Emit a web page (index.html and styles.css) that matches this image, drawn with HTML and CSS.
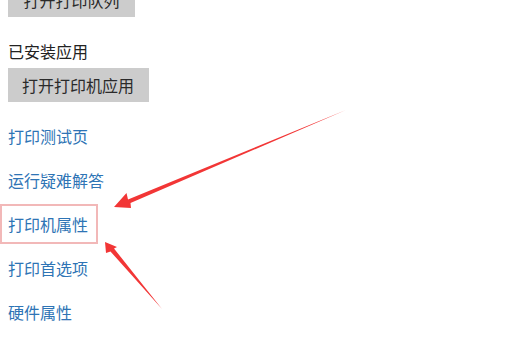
FILE: index.html
```html
<!DOCTYPE html>
<html lang="zh-CN">
  <head>
    <meta charset="UTF-8" />
    <title>打印机设置</title>
    <link rel="stylesheet" href="styles.css">
  </head>
  <body>
    <div class="panel">
      <button class="btn btn-top">打开打印队列</button>
      <p class="label">已安装应用</p>
      <button class="btn">打开打印机应用</button>
      <ul class="links">
        <li><a href="#">打印测试页</a></li>
        <li><a href="#">运行疑难解答</a></li>
        <li><a href="#" class="marked">打印机属性</a></li>
        <li><a href="#">打印首选项</a></li>
        <li><a href="#">硬件属性</a></li>
      </ul>
    </div>
    <!-- annotation arrows -->
    <svg class="arrows" width="530" height="358" viewBox="0 0 530 358">
      <polygon points="346,110 128,199.5 126.5,193 114,207 131,208 130.5,203" />
      <polygon points="162,309 114,248.5 117,247 105,242 106,253 110.5,251.5" />
    </svg>
  </body>
</html>
```

FILE: styles.css
```css
* {
  box-sizing: border-box;
  padding: 0;
  margin: 0;
}
body {
  font-family: "Noto Sans CJK SC", "Noto Sans", sans-serif;
  font-size: 16px;
  background: white;
  overflow: hidden;
  position: relative;
  width: 530px;
  height: 358px;
}
.panel {
  display: flex;
  flex-flow: column nowrap;
  align-items: flex-start;
  padding-left: 8px;
}
.btn {
  font-family: inherit;
  font-size: 16px;
  line-height: 20px;
  color: #2a2a2a;
  background: #cccccc;
  border: none;
  height: 34px;
  padding: 0 15px 0 14px;
}
.btn-top {
  margin-top: -17px;
  width: 127px;
  padding: 0;
}
.label {
  line-height: 20px;
  color: #222;
  margin: 24px 0 7px;
}
.links {
  list-style: none;
  display: flex;
  flex-flow: column nowrap;
  gap: 24px;
  margin-top: 24px;
}
.links li {
  line-height: 20px;
}
.links a {
  color: #2e74b5;
  text-decoration: none;
}
.marked {
  outline: 2px solid #f2b8b8;
  outline-offset: 6px;
  padding-right: 2px;
}
.arrows {
  position: absolute;
  left: 0;
  top: 0;
}
.arrows polygon {
  fill: #f23636;
}
```
